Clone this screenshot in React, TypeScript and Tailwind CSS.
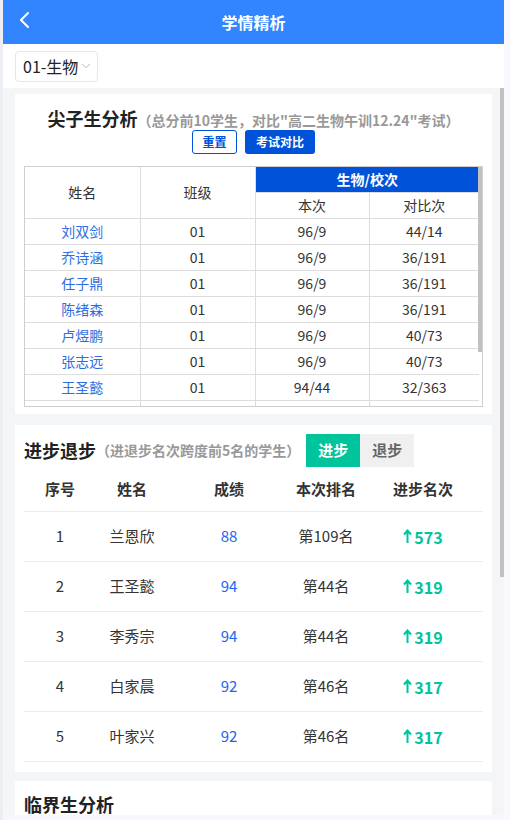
import { ChevronDown } from "lucide-react";

const topStudents = [
  { name: "刘双剑", cls: "01", now: "96/9", prev: "44/14" },
  { name: "乔诗涵", cls: "01", now: "96/9", prev: "36/191" },
  { name: "任子鼎", cls: "01", now: "96/9", prev: "36/191" },
  { name: "陈绪森", cls: "01", now: "96/9", prev: "36/191" },
  { name: "卢煜鹏", cls: "01", now: "96/9", prev: "40/73" },
  { name: "张志远", cls: "01", now: "96/9", prev: "40/73" },
  { name: "王圣懿", cls: "01", now: "94/44", prev: "32/363" },
  { name: "", cls: "", now: "", prev: "" },
  { name: "", cls: "", now: "", prev: "" },
];

const progress = [
  { no: 1, name: "兰恩欣", score: 88, rank: "第109名", up: 573 },
  { no: 2, name: "王圣懿", score: 94, rank: "第44名", up: 319 },
  { no: 3, name: "李秀宗", score: 94, rank: "第44名", up: 319 },
  { no: 4, name: "白家晨", score: 92, rank: "第46名", up: 317 },
  { no: 5, name: "叶家兴", score: 92, rank: "第46名", up: 317 },
];

export default function App() {
  return (
    <div
      className="flex h-[820px] w-[510px] overflow-hidden bg-[#f7f8fd]"
      style={{ fontFamily: '"Noto Sans CJK SC", "Noto Sans", sans-serif' }}
    >
      <div className="h-full w-[3px] bg-[#eceef4]" />

      <div className="flex h-[815px] w-[501px] flex-col bg-[#f4f5f7]">
        {/* Header */}
        <div className="relative flex h-[44px] shrink-0 items-center justify-center bg-[#3384ff]">
          <svg className="absolute left-[14px] top-[11px]" width="16" height="18" viewBox="0 0 16 18">
            <polyline points="11,2 4,9 11,16" fill="none" stroke="white" strokeWidth="2" strokeLinecap="round" strokeLinejoin="round" />
          </svg>
          <span className="text-[16px] font-bold text-white">学情精析</span>
        </div>

        {/* Filter */}
        <div className="flex h-[44px] shrink-0 items-center bg-white px-[12px]">
          <div className="flex h-[31px] items-center gap-[1px] rounded-[4px] border border-[#e6e6e6] pl-[7px] pr-[4px]">
            <span className="text-[16px] leading-none text-[#222]">01-生物</span>
            <ChevronDown className="h-[14px] w-[14px] text-[#aaa]" strokeWidth={1.5} />
          </div>
        </div>

        {/* Scroll area */}
        <div className="relative flex-1 overflow-hidden pl-[12px] pr-[12px] pt-[6px]">
          <div className="absolute right-0 top-0 h-[489px] w-[4px] bg-[#c1c1c1]" />

          {/* 尖子生分析 */}
          <div className="bg-white px-[9px] pt-[12px] pb-[7px]">
            <div className="flex h-[24px] items-baseline justify-center leading-[24px]">
              <span className="text-[18px] font-bold text-[#222]">尖子生分析</span>
              <span className="text-[14px] font-bold text-[#999]">（总分前10学生，对比"高二生物午训12.24"考试）</span>
            </div>
            <div className="flex justify-center gap-[8px]">
              <button className="h-[24px] w-[45px] rounded-[3px] border border-[#0052d9] text-[12px] font-bold text-[#0052d9]">
                重置
              </button>
              <button className="h-[24px] w-[70px] rounded-[3px] bg-[#0052d9] text-[12px] font-bold text-white">
                考试对比
              </button>
            </div>

            <div className="relative mt-[12px] h-[241px] overflow-hidden border border-[#cfcfcf]">
              <div className="absolute right-0 top-0 h-[185px] w-[4px] bg-[#c1c1c1]" />
              <table className="w-[454px] table-fixed border-collapse text-center text-[14px] text-[#333]">
                <colgroup>
                  <col className="w-[115px]" />
                  <col className="w-[115px]" />
                  <col className="w-[114px]" />
                  <col className="w-[110px]" />
                </colgroup>
                <thead>
                  <tr className="h-[25px]">
                    <th rowSpan={2} className="border border-t-0 border-l-0 border-[#ddd] p-0 font-normal">姓名</th>
                    <th rowSpan={2} className="border border-t-0 border-[#ddd] p-0 font-normal">班级</th>
                    <th colSpan={2} className="border border-t-0 border-r-0 border-[#ddd] bg-[#0052d9] p-0 font-bold text-white">
                      生物/校次
                    </th>
                  </tr>
                  <tr className="h-[26px]">
                    <th className="border border-[#ddd] p-0 font-normal">本次</th>
                    <th className="border border-r-0 border-[#ddd] p-0 font-normal">对比次</th>
                  </tr>
                </thead>
                <tbody>
                  {topStudents.map((s, i) => (
                    <tr key={i} className="h-[26px]">
                      <td className="border border-l-0 border-[#ddd] p-0 text-[#2f6ee0]">{s.name}</td>
                      <td className="border border-[#ddd] p-0">{s.cls}</td>
                      <td className="border border-[#ddd] p-0">{s.now}</td>
                      <td className="border border-r-0 border-[#ddd] p-0">{s.prev}</td>
                    </tr>
                  ))}
                </tbody>
              </table>
            </div>
          </div>

          {/* 进步退步 */}
          <div className="mt-[11px] bg-white px-[9px] pt-[9px] pb-[10px]">
            <div className="flex h-[33px] items-center">
              <span className="text-[18px] font-bold text-[#222]">进步退步</span>
              <span className="text-[14px] font-bold text-[#999]">（进退步名次跨度前5名的学生）</span>
              <div className="ml-[6px] flex h-full">
                <div className="flex w-[54px] items-center justify-center bg-[#00c49b] text-[15px] font-bold text-white">进步</div>
                <div className="flex w-[54px] items-center justify-center bg-[#f0f0f0] text-[15px] font-bold text-[#666]">退步</div>
              </div>
            </div>

            <div className="grid h-[45px] grid-cols-[72px_72px_122px_72px_122px] items-center border-b border-[#ececec] text-center text-[15px] font-bold text-[#333]">
              <span>序号</span>
              <span>姓名</span>
              <span>成绩</span>
              <span>本次排名</span>
              <span>进步名次</span>
            </div>
            {progress.map((p) => (
              <div
                key={p.no}
                className="grid h-[50px] grid-cols-[72px_72px_122px_72px_122px] items-center border-b border-[#ececec] text-center text-[15px] text-[#333]"
              >
                <span>{p.no}</span>
                <span>{p.name}</span>
                <span className="text-[#1a66ee]">{p.score}</span>
                <span>{p.rank}</span>
                <span className="flex items-center justify-center gap-[2px] text-[16px] font-bold text-[#00c49b]">
                  <svg width="9" height="15" viewBox="0 0 9 15">
                    <path d="M4.5 14V2M1 5.5L4.5 1.5L8 5.5" fill="none" stroke="currentColor" strokeWidth="2" />
                  </svg>
                  {p.up}
                </span>
              </div>
            ))}
          </div>

          {/* 临界生分析 */}
          <div className="mt-[9px] h-[34px] bg-white px-[9px] pt-[13px]">
            <span className="block text-[18px] font-bold leading-[20px] text-[#222]">临界生分析</span>
          </div>
        </div>
      </div>

      <div className="h-full flex-1 bg-[#f8f8fe]" />
    </div>
  );
}
